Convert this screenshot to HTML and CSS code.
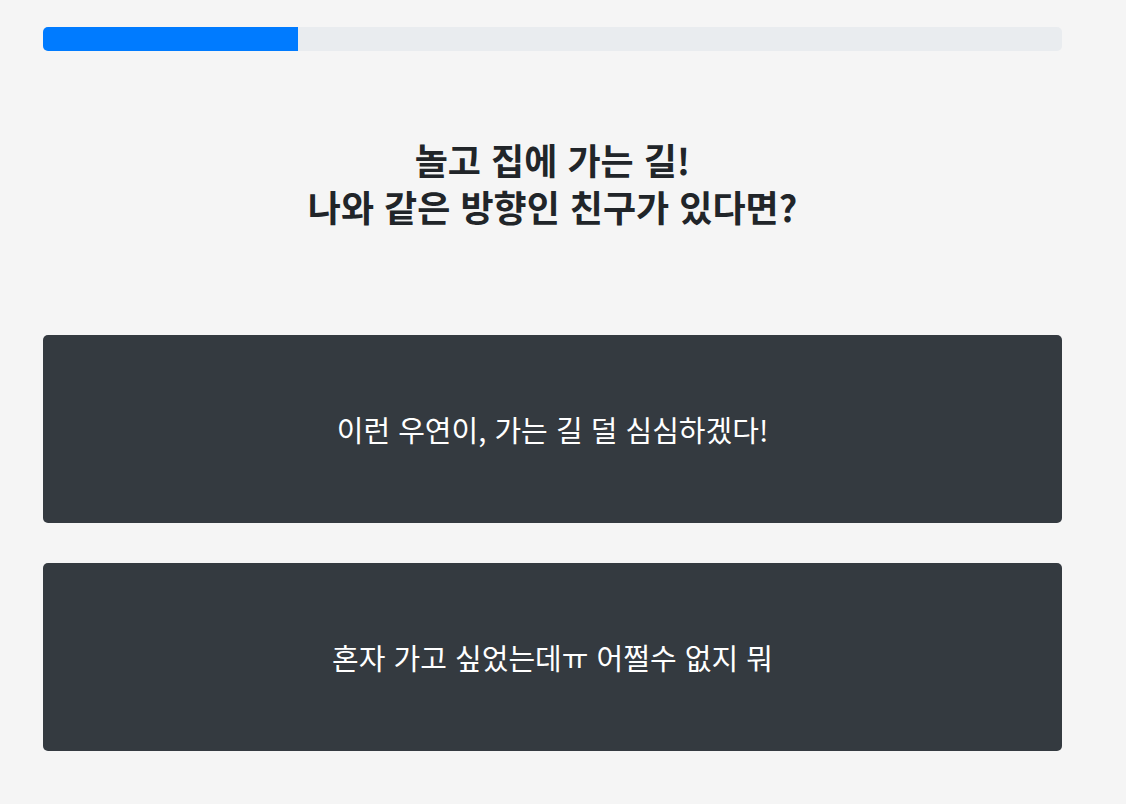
FILE: index.html
```html
<!DOCTYPE html>
<html lang="ko">
<head>
  <meta charset="UTF-8" />
  <meta name="viewport" content="width=device-width, initial-scale=1.0"/>
  <title>방향 테스트</title>
  <link rel="stylesheet" href="styles.css">
</head>
<body>

  <div class="quiz">
    <div class="progress">
      <div class="progress-bar" style="width: 25%;"></div>
    </div>

    <h2 class="question">놀고 집에 가는 길!<br>나와 같은 방향인 친구가 있다면?</h2>

    <div class="answers">
      <button class="answer">이런 우연이, 가는 길 덜 심심하겠다!</button>
      <button class="answer">혼자 가고 싶었는데ㅠ 어쩔수 없지 뭐</button>
    </div>
  </div>

</body>
</html>
```

FILE: styles.css
```css
body {
  margin: 0;
  padding: 0;
  background: #f5f5f5;
  color: #212529;
  font-family: "Noto Sans CJK KR", "Noto Sans", sans-serif;
}
.quiz {
  width: 1019px;
  padding: 27px 0 0 43px;
}
.progress {
  height: 24px;
  background: #e9ecef;
  border-radius: 5px;
  overflow: hidden;
  display: flex;
}
.progress-bar {
  background: #007bff;
}
.question {
  margin: 85px 0 0;
  text-align: center;
  font-size: 36px;
  font-weight: 700;
  line-height: 47px;
}
.answers {
  margin-top: 105px;
  display: flex;
  flex-direction: column;
  gap: 40px;
}
.answer {
  height: 188px;
  border: none;
  border-radius: 5px;
  background: #343a40;
  color: #fff;
  font-family: inherit;
  font-size: 29px;
  cursor: pointer;
}
```
